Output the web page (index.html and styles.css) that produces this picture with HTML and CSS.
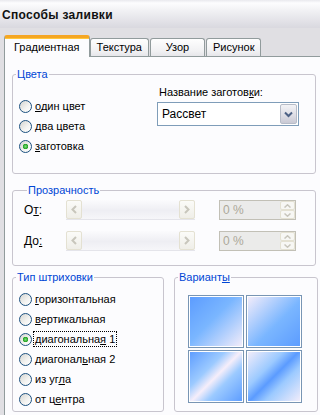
FILE: index.html
```html
<!DOCTYPE html>
<html lang="ru">
<head>
  <meta charset="UTF-8">
  <title>Способы заливки</title>
  <link rel="stylesheet" href="styles.css">
</head>
<body>
  <div class="titlebar">Способы заливки</div>

  <!-- Вкладки -->
  <div class="tabs">
    <div class="tab active">Градиентная</div>
    <div class="tab">Текстура</div>
    <div class="tab">Узор</div>
    <div class="tab">Рисунок</div>
  </div>

  <div class="panel">
    <!-- Цвета -->
    <fieldset class="group colors">
      <legend>Цвета</legend>
      <div class="colors-body">
        <div class="radio-list colors-list">
          <label class="radio"><input type="radio" name="colors"><span><u>о</u>дин цвет</span></label>
          <label class="radio"><input type="radio" name="colors"><span><u>д</u>ва цвета</span></label>
          <label class="radio"><input type="radio" name="colors" checked><span><u>з</u>аготовка</span></label>
        </div>
        <div class="preset">
          <div class="preset-label">Название заготов<u>к</u>и:</div>
          <div class="select">
            <span class="select-value">Рассвет</span>
            <span class="select-btn">
              <svg width="9" height="7" viewBox="0 0 9 7"><path d="M1 1.5 L4.5 5 L8 1.5" fill="none" stroke="#4d6185" stroke-width="2"/></svg>
            </span>
          </div>
        </div>
      </div>
    </fieldset>

    <!-- Прозрачность -->
    <fieldset class="group transparency">
      <legend>Прозрачность</legend>
      <div class="slider-row">
        <div class="slider-label">О<u>т</u>:</div>
        <div class="slider">
          <span class="slider-btn"><svg width="6" height="9" viewBox="0 0 6 9"><path d="M5 1 L1.5 4.5 L5 8" fill="none" stroke="#c8c6bc" stroke-width="2"/></svg></span>
          <span class="slider-track"></span>
          <span class="slider-btn"><svg width="6" height="9" viewBox="0 0 6 9"><path d="M1 1 L4.5 4.5 L1 8" fill="none" stroke="#c8c6bc" stroke-width="2"/></svg></span>
        </div>
        <div class="spin">
          <span class="spin-value">0 %</span>
          <span class="spin-btns">
            <span class="spin-btn"><svg width="7" height="4" viewBox="0 0 7 4"><path d="M0.5 3.5 L3.5 0.8 L6.5 3.5" fill="none" stroke="#c8c6bc" stroke-width="1.5"/></svg></span>
            <span class="spin-btn"><svg width="7" height="4" viewBox="0 0 7 4"><path d="M0.5 0.5 L3.5 3.2 L6.5 0.5" fill="none" stroke="#c8c6bc" stroke-width="1.5"/></svg></span>
          </span>
        </div>
      </div>
      <div class="slider-row">
        <div class="slider-label">До<u>:</u></div>
        <div class="slider">
          <span class="slider-btn"><svg width="6" height="9" viewBox="0 0 6 9"><path d="M5 1 L1.5 4.5 L5 8" fill="none" stroke="#c8c6bc" stroke-width="2"/></svg></span>
          <span class="slider-track"></span>
          <span class="slider-btn"><svg width="6" height="9" viewBox="0 0 6 9"><path d="M1 1 L4.5 4.5 L1 8" fill="none" stroke="#c8c6bc" stroke-width="2"/></svg></span>
        </div>
        <div class="spin">
          <span class="spin-value">0 %</span>
          <span class="spin-btns">
            <span class="spin-btn"><svg width="7" height="4" viewBox="0 0 7 4"><path d="M0.5 3.5 L3.5 0.8 L6.5 3.5" fill="none" stroke="#c8c6bc" stroke-width="1.5"/></svg></span>
            <span class="spin-btn"><svg width="7" height="4" viewBox="0 0 7 4"><path d="M0.5 0.5 L3.5 3.2 L6.5 0.5" fill="none" stroke="#c8c6bc" stroke-width="1.5"/></svg></span>
          </span>
        </div>
      </div>
    </fieldset>

    <div class="bottom-row">
      <!-- Тип штриховки -->
      <fieldset class="group hatch">
        <legend>Тип штриховки</legend>
        <div class="radio-list hatch-list">
          <label class="radio"><input type="radio" name="hatch"><span><u>г</u>оризонтальная</span></label>
          <label class="radio"><input type="radio" name="hatch"><span><u>в</u>ертикальная</span></label>
          <label class="radio"><input type="radio" name="hatch" checked><span class="focus">диагональна<u>я</u> 1</span></label>
          <label class="radio"><input type="radio" name="hatch"><span>диагонал<u>ь</u>ная 2</span></label>
          <label class="radio"><input type="radio" name="hatch"><span>из уг<u>л</u>а</span></label>
          <label class="radio"><input type="radio" name="hatch"><span>от ц<u>е</u>нтра</span></label>
        </div>
      </fieldset>

      <!-- Варианты -->
      <fieldset class="group variants">
        <legend>Вариант<u>ы</u></legend>
        <div class="variant-grid">
          <div class="variant v1"></div>
          <div class="variant v2"></div>
          <div class="variant v3"></div>
          <div class="variant v4"></div>
        </div>
      </fieldset>
    </div>
  </div>
</body>
</html>
```

FILE: styles.css
```css
/* Окно в стиле Windows XP (серебристая тема) */
body {
  margin: 0;
  background: #e0dfe3;
  font-family: 'Liberation Sans', Arial, sans-serif;
  font-size: 11px;
  color: #000;
  overflow: hidden;
}

u {
  text-decoration: underline;
  text-underline-offset: 1px;
}

/* Заголовок */
.titlebar {
  height: 28px;
  line-height: 30px;
  padding-left: 2px;
  font-size: 12px;
  font-weight: bold;
  letter-spacing: 0.3px;
  color: #111;
  background: linear-gradient(#e9e9ee 0, #fdfdfe 3px, #f0f0f3 40%, #d9d8df 100%);
}

/* Вкладки */
.tabs {
  display: flex;
  align-items: flex-end;
  margin-top: 7px;
  padding-left: 4px;
}

.tab {
  height: 17px;
  line-height: 17px;
  min-width: 41px;
  padding: 0 6px;
  margin-right: 1px;
  text-align: center;
  border: 1px solid #919b9c;
  border-bottom: none;
  border-radius: 3px 3px 0 0;
  background: linear-gradient(#fefefe, #f1f1f3 70%, #e6e6ea);
  font-size: 11px;
}

.tab.active {
  position: relative;
  height: 19px;
  line-height: 19px;
  padding: 0 9px;
  margin-right: 0;
  margin-bottom: -1px;
  border-top: 3px solid #f5a623;
  background: #fcfcfe;
  box-shadow: inset 0 1px 0 #ffc73c;
}

/* Панель вкладки */
.panel {
  margin-left: 4px;
  padding: 0 2px 4px 7px;
  border-top: 1px solid #919b9c;
  border-left: 1px solid #919b9c;
  background: #fcfcfe;
}

/* Рамки групп */
.group {
  margin: 0;
  padding: 0;
  min-width: 0;
  border: 1px solid #c8c5ce;
  border-radius: 3px;
}

.group legend {
  margin-left: 3px;
  padding: 0 1px;
  line-height: 13px;
  font-size: 11px;
  color: #0046d5;
}

.colors {
  margin: 11px 2px 0 0;
}

.transparency {
  margin: 10px 2px 0 0;
  padding: 3px 0 14px 11px;
}

.bottom-row {
  display: flex;
  gap: 10px;
  margin-top: 5px;
}

/* Радиокнопки */
.radio {
  display: flex;
  align-items: center;
  height: 20px;
  gap: 3px;
}

.radio input {
  appearance: none;
  -webkit-appearance: none;
  width: 13px;
  height: 13px;
  margin: 0;
  border: 1px solid #1c5180;
  border-radius: 50%;
  background: linear-gradient(135deg, #d4d4d0, #f4f4f2 60%, #ffffff);
}

.radio input:checked {
  background: radial-gradient(circle, #7bdc7b 0, #21a121 2.5px, transparent 3px),
              linear-gradient(135deg, #d4d4d0, #f4f4f2 60%, #ffffff);
}

.radio .focus {
  outline: 1px dotted #000;
  outline-offset: 0;
  padding: 0 1px;
  margin-left: -1px;
  line-height: 14px;
}

/* Цвета */
.colors-body {
  display: flex;
  height: 92px;
  padding-left: 6px;
}

.colors-list {
  width: 138px;
  padding-top: 15px;
}

.preset {
  padding-top: 5px;
}

.preset-label {
  line-height: 13px;
  padding-left: 2px;
}

.select {
  display: flex;
  align-items: center;
  width: 138px;
  height: 20px;
  margin-top: 3px;
  padding: 1px;
  border: 1px solid #7f9db9;
  background: #fff;
}

.select-value {
  flex: 1;
  padding-left: 3px;
  font-size: 12px;
}

.select-btn {
  display: flex;
  align-items: center;
  justify-content: center;
  width: 15px;
  height: 18px;
  border: 1px solid #b7bcc8;
  border-radius: 2px;
  background: linear-gradient(#f3f3f6, #dcdce4 60%, #c9c9d4);
}

/* Прозрачность */
.slider-row {
  display: flex;
  align-items: center;
  height: 20px;
}

.slider-row + .slider-row {
  margin-top: 11px;
}

.slider-label {
  width: 42px;
  font-size: 12px;
}

.slider {
  display: flex;
  width: 129px;
  height: 20px;
  margin-right: 24px;
  background: linear-gradient(#fbfbfd, #eeeef3 55%, #f6f6f9);
  border-bottom: 1px solid #e4e4ea;
  box-sizing: border-box;
}

.slider-track {
  flex: 1;
}

.slider-btn {
  display: flex;
  align-items: center;
  justify-content: center;
  width: 14px;
  border: 1px solid #e4e1d2;
  border-radius: 2px;
  background: linear-gradient(#fbfbf8, #efeee8);
}

.spin {
  display: flex;
  width: 77px;
  height: 20px;
  box-sizing: border-box;
  border: 1px solid #c2c0b6;
  background: #ebebea;
}

.spin-value {
  flex: 1;
  padding-left: 3px;
  line-height: 18px;
  font-size: 12px;
  color: #aca899;
}

.spin-btns {
  display: flex;
  flex-direction: column;
  width: 15px;
}

.spin-btn {
  flex: 1;
  display: flex;
  align-items: center;
  justify-content: center;
  border: 1px solid #e4e1d2;
  border-radius: 2px;
  background: #f7f7f4;
}

/* Тип штриховки */
.hatch {
  width: 152px;
  box-sizing: border-box;
}

.hatch-list {
  padding: 5px 0 2px 6px;
}

/* Варианты */
.variants {
  flex: 1;
}

.variant-grid {
  display: grid;
  grid-template-columns: 56px 56px;
  grid-template-rows: 53px 53px;
  gap: 2px;
  padding: 11px 0 0 13px;
}

.variant {
  border: 1px solid #7895b4;
  box-shadow: inset 0 0 0 1px #fff;
}

.v1 {
  background: linear-gradient(135deg, #5b9bff, #7ab6ff 45%, #f6eefa);
}

.v2 {
  background: linear-gradient(135deg, #f6eefa, #7ab6ff 55%, #5b9bff);
}

.v3 {
  background: linear-gradient(135deg, #5b9bff, #9ccaff 35%, #f6eefa 50%, #9ccaff 65%, #5b9bff);
}

.v4 {
  background: linear-gradient(135deg, #f6eefa, #9ccaff 35%, #5b9bff 50%, #9ccaff 65%, #f6eefa);
}
```
